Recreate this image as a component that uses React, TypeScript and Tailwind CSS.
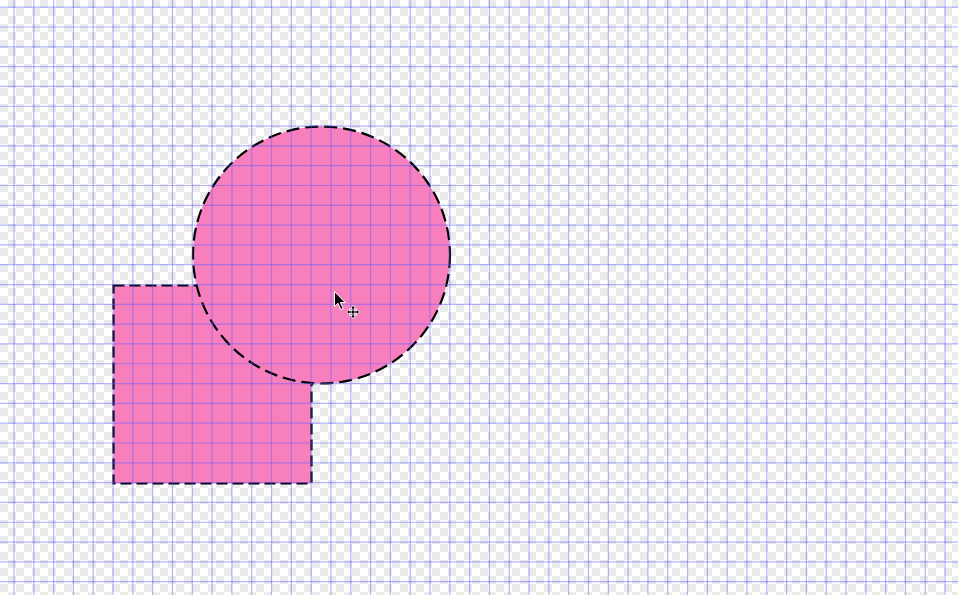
const GRID = 19.81
const xs = Array.from({ length: 49 }, (_, i) => 14 + (i - 1) * GRID)
const ys = Array.from({ length: 31 }, (_, i) => 27 + (i - 1) * GRID)

function Cursor() {
  return (
    <svg className="absolute left-[332px] top-[290px]" width="32" height="32" viewBox="0 0 32 32">
      {/* arrow */}
      <path d="M2.5 1.5 L2.5 16.5 L6 13.3 L8.8 19.6 L11.1 18.6 L8.4 12.5 L13.2 12.5 Z" fill="#000" stroke="#fff" strokeWidth="1" strokeLinejoin="round" />
      {/* move glyph */}
      <g transform="translate(21 22)" fill="#000" stroke="#fff" strokeWidth="0.9" strokeLinejoin="round">
        <path d="M0 -6.5 L2.8 -3.5 L1 -3.5 L1 -1 L3.5 -1 L3.5 -2.8 L6.5 0 L3.5 2.8 L3.5 1 L1 1 L1 3.5 L2.8 3.5 L0 6.5 L-2.8 3.5 L-1 3.5 L-1 1 L-3.5 1 L-3.5 2.8 L-6.5 0 L-3.5 -2.8 L-3.5 -1 L-1 -1 L-1 -3.5 L-2.8 -3.5 Z" />
      </g>
    </svg>
  )
}

export default function App() {
  return (
    <div className="relative w-[958px] h-[595px] overflow-hidden bg-white">
      <svg className="block" width="958" height="595" viewBox="0 0 958 595">
        <defs>
          <pattern id="checker" width="16" height="16" patternUnits="userSpaceOnUse">
            <rect width="16" height="16" fill="#ffffff" />
            <rect x="8" y="0" width="8" height="8" fill="#ebebeb" />
            <rect x="0" y="8" width="8" height="8" fill="#ebebeb" />
          </pattern>
        </defs>
        <rect width="958" height="595" fill="url(#checker)" />

        <rect x="113.5" y="285.5" width="198" height="198" fill="#f77fbe" stroke="#000" strokeWidth="2.2" strokeDasharray="11 5" />
        <circle cx="321.5" cy="255" r="128.5" fill="#f77fbe" stroke="#000" strokeWidth="2.2" strokeDasharray="13 6" />

        <g stroke="rgba(90,90,255,0.45)" strokeWidth="1.2">
          {xs.map((x) => (
            <line key={"v" + x} x1={x} y1="0" x2={x} y2="595" />
          ))}
          {ys.map((y) => (
            <line key={"h" + y} x1="0" y1={y} x2="958" y2={y} />
          ))}
        </g>
      </svg>
      <Cursor />
    </div>
  )
}
